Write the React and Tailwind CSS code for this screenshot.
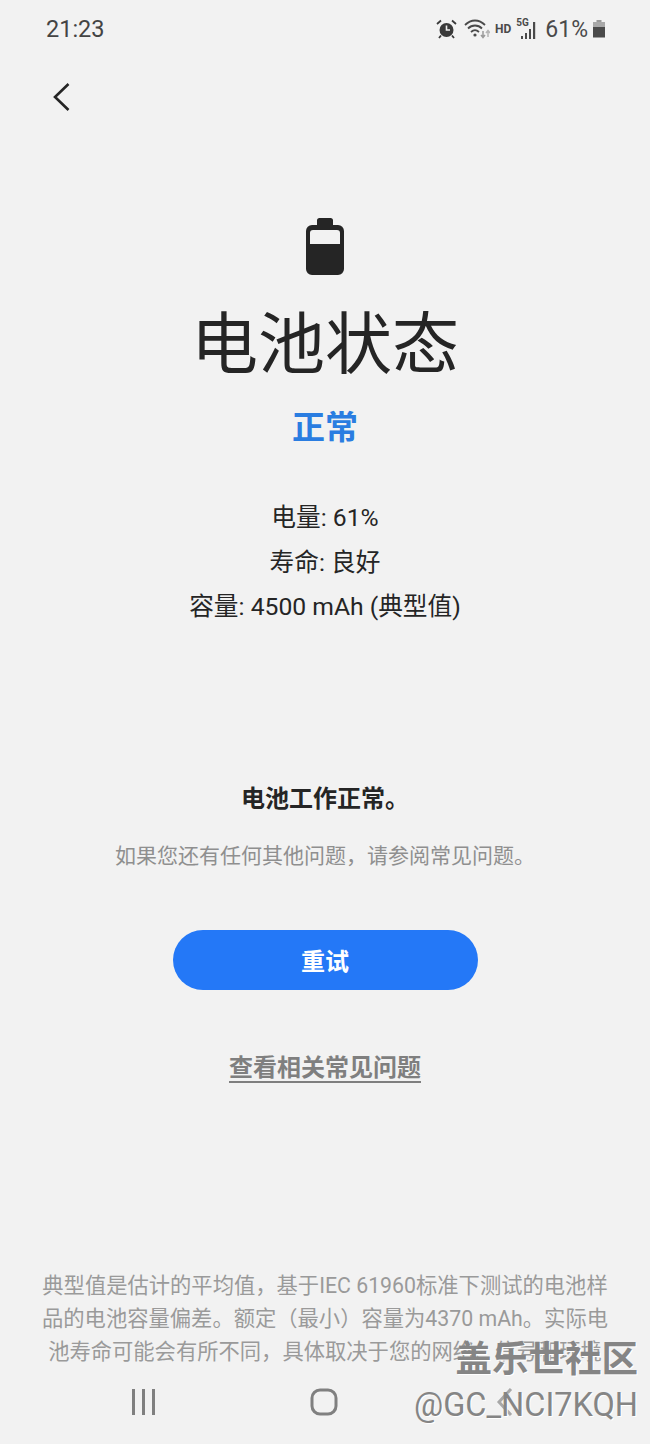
const CJK = "font-['Roboto','Noto_Sans_CJK_SC',sans-serif]";

function StatusIcons() {
  return (
    <div className="flex items-center">
      {/* alarm */}
      <svg width="21" height="20" viewBox="0 0 21 20" className="mr-[7px] text-[#3a3a3a]">
        <circle cx="10.500" cy="11" r="7" fill="currentColor" />
        <path d="M10.500 6.500v4.500h3.500" fill="none" stroke="#f2f2f2" strokeWidth="1.600" />
        <path d="M1 5l4-3.500M20 5l-4-3.500M5 16.500l-2 2.500M16 16.500l2 2.500" stroke="currentColor" strokeWidth="1.800" fill="none" />
      </svg>
      {/* wifi */}
      <svg width="26" height="22" viewBox="0 0 26 22" className="mr-[5px] text-[#4a4a4a]">
        <path d="M1 7c6-6 14-6 20 0M4 10.500c4-4 10-4 14 0M7 14c2.500-2.300 5.500-2.300 8 0" fill="none" stroke="currentColor" strokeWidth="1.800" />
        <circle cx="11" cy="17" r="1.600" fill="currentColor" />
        <path d="M19 13v6M17 17l2 2.500 2-2.500" stroke="#9a9a9a" strokeWidth="1.500" fill="none" />
        <path d="M24 19v-6M22 15l2-2.500 2 2.500" stroke="#b5b5b5" strokeWidth="1.500" fill="none" />
      </svg>
      <span className="mr-[5px] text-[12px] font-bold leading-none text-[#4a4a4a] font-['Roboto',sans-serif]">HD</span>
      {/* 5G signal */}
      <div className="relative mr-[7px] h-[24px] w-[22px]">
        <span className="absolute left-0 top-[1px] text-[10px] font-bold leading-none text-[#4a4a4a] font-['Roboto',sans-serif]">5G</span>
        <svg width="22" height="24" viewBox="0 0 22 24" className="absolute inset-0 text-[#4a4a4a]">
          <path d="M5 19h2v3H5zM9 16h2v6H9zM13 12h2v10h-2zM17 5h2.200v17H17z" fill="currentColor" />
        </svg>
      </div>
      <span className="text-[23px] leading-none text-[#4a4a4a] font-['Roboto',sans-serif]">61%</span>
      {/* small battery */}
      <svg width="14" height="20" viewBox="0 0 14 20" className="ml-[4px] text-[#4a4a4a]">
        <path d="M4.500 1h5v2h-5z" fill="#9a9a9a" />
        <path d="M1 3h12v5H1z" fill="#a8a8a8" />
        <path d="M1 8h12v10.500H1z" fill="currentColor" />
      </svg>
    </div>
  );
}

function BatteryIcon() {
  return (
    <svg width="38" height="57" viewBox="0 0 38 57" className="text-[#252525]">
      <path
        fillRule="evenodd"
        fill="currentColor"
        d="M11 2.500a2.500 2.500 0 0 1 2.500-2.500h11a2.500 2.500 0 0 1 2.500 2.500V7h5a6 6 0 0 1 6 6v38a6 6 0 0 1-6 6H6a6 6 0 0 1-6-6V13a6 6 0 0 1 6-6h5zM7 12a3 3 0 0 0-3 3V26h30V15a3 3 0 0 0-3-3z"
      />
    </svg>
  );
}

export default function App() {
  return (
    <div className={`relative flex h-[1444px] w-[650px] flex-col overflow-hidden bg-[#f2f2f2] ${CJK}`}>
      {/* status bar */}
      <div className="flex h-[58px] items-center justify-between pl-[46px] pr-[44px]">
        <span className="pt-[1px] text-[23.500px] leading-none text-[#444444] font-['Roboto',sans-serif]">21:23</span>
        <StatusIcons />
      </div>

      {/* back */}
      <div className="h-[160px] pl-[53px] pt-[25px]">
        <svg width="18" height="28" viewBox="0 0 18 28" className="text-[#252525]">
          <path d="M15.500 1L2 14l13.500 13" fill="none" stroke="currentColor" strokeWidth="2.600" />
        </svg>
      </div>

      {/* main */}
      <div className="flex flex-col items-center text-center">
        <BatteryIcon />
        <h1 className="mt-[25px] text-[67px] font-normal leading-[90px] text-[#252525]">电池状态</h1>
        <p className="mt-[15px] text-[33px] font-bold leading-[46px] text-[#2a7de1]">正常</p>
        <div className="mt-[46px] flex flex-col gap-[3px] text-[24.700px] leading-[41.500px] text-[#252525]">
          <p>电量: 61%</p>
          <p>寿命: 良好</p>
          <p>容量: 4500 mAh (典型值)</p>
        </div>
        <p className="mt-[155px] text-[24px] font-bold leading-[32px] text-[#252525]">电池工作正常。</p>
        <p className="mt-[25px] text-[21px] leading-[32px] text-[#8f8f8f]">如果您还有任何其他问题，请参阅常见问题。</p>
        <button className="mt-[58px] flex h-[60px] w-[305px] items-center justify-center rounded-full bg-[#2478f7] pt-[5px] text-[24px] font-bold text-white">
          重试
        </button>
        <a className="mt-[61px] text-[24px] font-bold leading-[34px] text-[#7f7f7f] underline underline-offset-[5px]">查看相关常见问题</a>
      </div>

      {/* footnote */}
      <div className="mt-[184px] text-center text-[21.300px] leading-[33px] whitespace-nowrap text-[#9a9a9a]">
        <p>典型值是估计的平均值，基于IEC 61960标准下测试的电池样</p>
        <p>品的电池容量偏差。额定（最小）容量为4370 mAh。实际电</p>
        <p>池寿命可能会有所不同，具体取决于您的网络、信号和环境</p>
      </div>

      {/* nav bar */}
      <div className="mt-[20px] flex items-center justify-center gap-[154px] pr-[2px]">
        <svg width="26" height="26" viewBox="0 0 26 26" className="text-[#808080]">
          <path d="M2 0h3v26H2zM12 0h3v26h-3zM22 0h3v26h-3z" fill="currentColor" />
        </svg>
        <svg width="28" height="28" viewBox="0 0 28 28" className="text-[#808080]">
          <rect x="2" y="2" width="24" height="24" rx="8" fill="none" stroke="currentColor" strokeWidth="3" />
        </svg>
        <svg width="26" height="28" viewBox="0 0 26 28" className="text-[#a8a8a8]">
          <path d="M19 1L7 14l12 13" fill="none" stroke="currentColor" strokeWidth="3" />
        </svg>
      </div>

      {/* watermark */}
      <div className="absolute bottom-[20px] right-[12px] flex flex-col items-end text-[#858585] [text-shadow:1px_1px_0_#ffffff]">
        <span className="text-[36.500px] font-bold leading-[44px]">盖乐世社区</span>
        <span className="mt-[4px] text-[32.500px] leading-[38px] font-['Roboto',sans-serif]">@GC_NCI7KQH</span>
      </div>
    </div>
  );
}
